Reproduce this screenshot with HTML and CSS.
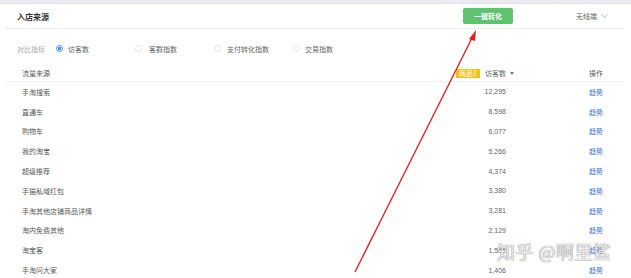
FILE: index.html
```html
<!DOCTYPE html>
<html lang="zh-CN">
<head>
  <meta charset="UTF-8" />
  <title>入店来源</title>
  <link rel="stylesheet" href="styles.css">
</head>
<body>
  <div class="topbar">
    <div class="cells"><span></span><span></span><span></span><span></span><span></span></div>
  </div>
  <div class="card">
    <div class="head">
      <h2>入店来源</h2>
      <button class="convert">一键转化</button>
      <div class="device">无线端 <span class="caret"></span></div>
    </div>

    <div class="filters">
      <span class="filter-label">对比指标</span>
      <label class="radio checked"><i></i>访客数</label>
      <label class="radio"><i></i>客群指数</label>
      <label class="radio"><i></i>支付转化指数</label>
      <label class="radio"><i></i>交易指数</label>
    </div>

    <div class="table">
      <div class="row th">
        <div>流量来源</div>
        <div class="num"><span class="badge">商品1</span>访客数<span class="sort"></span></div>
        <div class="op">操作</div>
      </div>
      <div class="row"><div>手淘搜索</div><div class="num">12,295</div><div class="op"><a>趋势</a></div></div>
      <div class="row"><div>直通车</div><div class="num">8,598</div><div class="op"><a>趋势</a></div></div>
      <div class="row"><div>购物车</div><div class="num">6,077</div><div class="op"><a>趋势</a></div></div>
      <div class="row"><div>我的淘宝</div><div class="num">5,266</div><div class="op"><a>趋势</a></div></div>
      <div class="row"><div>超级推荐</div><div class="num">4,374</div><div class="op"><a>趋势</a></div></div>
      <div class="row"><div>手猫私域红包</div><div class="num">3,380</div><div class="op"><a>趋势</a></div></div>
      <div class="row"><div>手淘其他店铺商品详情</div><div class="num">3,281</div><div class="op"><a>趋势</a></div></div>
      <div class="row"><div>淘内免费其他</div><div class="num">2,129</div><div class="op"><a>趋势</a></div></div>
      <div class="row"><div>淘宝客</div><div class="num">1,555</div><div class="op"><a>趋势</a></div></div>
      <div class="row"><div>手淘问大家</div><div class="num">1,406</div><div class="op"><a>趋势</a></div></div>
    </div>
  </div>

  <svg class="arrow" width="631" height="278" viewBox="0 0 631 278">
    <line x1="355" y1="272" x2="472" y2="38" stroke="#e02020" stroke-width="1.4" />
    <polygon points="476,30 469,39 475,41" fill="#e02020" />
  </svg>

  <div class="watermark">知乎 @啊里鲨</div>
</body>
</html>
```

FILE: styles.css
```css
body {
  margin: 0;
  background: #fff;
  font-family: "Noto Sans CJK SC", "Noto Sans", sans-serif;
  color: #5a5a5a;
  font-size: 7px;
  position: relative;
  height: 278px;
  overflow: hidden;
}
.topbar {
  height: 3px;
  background: #e9ebf1;
  border-bottom: 1px solid #dfe2ea;
  position: relative;
}
.cells {
  display: flex;
  margin-left: 457px;
  width: 165px;
  height: 3px;
}
.cells span {
  flex: 1;
  border-left: 1px solid #f4f5f8;
}
.card {
  padding: 0 8px 0 5px;
}
.head {
  display: flex;
  align-items: center;
  height: 24px;
  border-bottom: 1px solid #ececec;
  padding-left: 12px;
}
.head h2 {
  margin: 0;
  font-size: 8px;
  font-weight: bold;
  color: #333;
  flex: 1;
}
.convert {
  width: 50px;
  height: 16px;
  border: 0;
  border-radius: 2px;
  background: #5dc36f;
  color: #fff;
  font-family: inherit;
  font-size: 7px;
  font-weight: bold;
  padding: 0;
  margin-right: 63px;
}
.device {
  color: #666;
  width: 47px;
  display: flex;
  align-items: center;
  gap: 3px;
}
.caret {
  width: 4px;
  height: 4px;
  border-right: 1px solid #ccc;
  border-bottom: 1px solid #ccc;
  transform: rotate(45deg);
  margin-top: -3px;
  margin-left: 2px;
}
.filters {
  display: flex;
  align-items: center;
  height: 33px;
  padding: 3px 0 0 12px;
}
.filter-label {
  color: #aaa;
  width: 39px;
}
.radio {
  display: flex;
  align-items: center;
  width: 79px;
  color: #666;
}
.radio i {
  width: 5px;
  height: 5px;
  border: 1px solid #e4e4e4;
  border-radius: 50%;
  margin-right: 5px;
  box-sizing: content-box;
}
.radio.checked i {
  border-color: #4a8ce6;
  background: radial-gradient(circle, #4a8ce6 0 1.4px, #fff 1.8px);
}
.radio:nth-child(3) i { margin-right: 7px; }
.radio:nth-child(4) i { margin-right: 6px; }
.row {
  display: grid;
  grid-template-columns: 1fr 140px 97px;
  align-items: center;
  height: 19.8px;
  padding-left: 17px;
  padding-right: 20px;
}
.row.th {
  height: 16px;
  border-bottom: 1px solid #f0f0f0;
}
.num {
  text-align: right;
  font-family: "Liberation Sans", sans-serif;
  color: #666;
}
.th .num {
  font-family: "Noto Sans CJK SC", sans-serif;
  display: flex;
  justify-content: flex-end;
  align-items: center;
  margin-right: -8px;
}
.badge {
  background: #f2c21b;
  color: #fff;
  padding: 0 3px;
  height: 9px;
  line-height: 9px;
  margin-right: 5px;
}
.sort {
  width: 0;
  height: 0;
  border-left: 2px solid transparent;
  border-right: 2px solid transparent;
  border-top: 3px solid #4a7fdc;
  margin-left: 4px;
}
.op {
  text-align: right;
}
.op a {
  color: #3b6fd2;
}
.arrow {
  position: absolute;
  left: 0;
  top: 0;
  pointer-events: none;
}
.watermark {
  position: absolute;
  left: 497px;
  top: 238px;
  font-size: 18px;
  color: rgba(255, 255, 255, 0.85);
  text-shadow: 0 0 1px #888, 0 0 1px #888;
  letter-spacing: 0.5px;
}
```
